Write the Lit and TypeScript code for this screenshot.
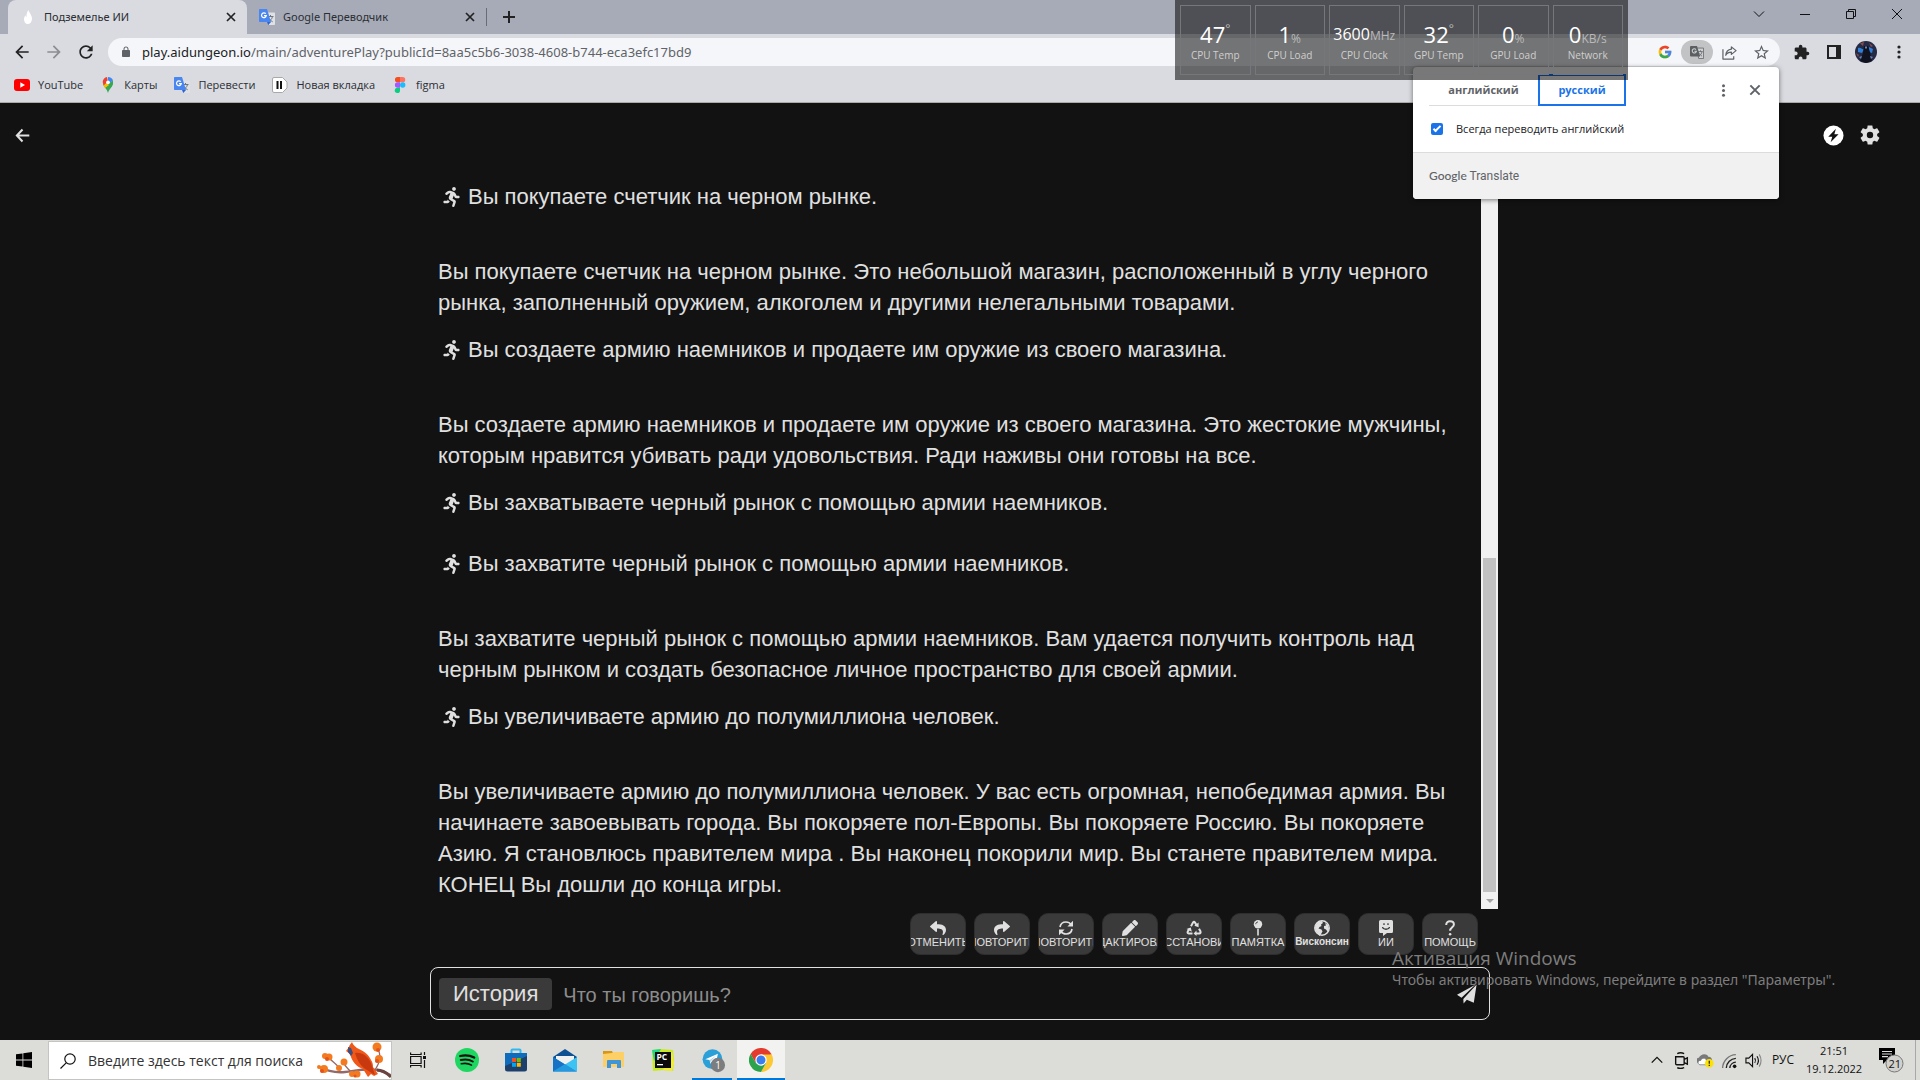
import { LitElement, html, css, svg, nothing } from "lit";
import { customElement, property } from "lit/decorators.js";

const icons: Record<string, { box: string; body: unknown }> = {
  back: { box: "0 0 24 24", body: svg`<path fill="currentColor" d="M20 11H7.83l5.59-5.59L12 4l-8 8 8 8 1.41-1.41L7.83 13H20z"/>` },
  backRound: { box: "0 0 20 20", body: svg`<path fill="none" stroke="currentColor" stroke-width="2.4" d="M18 10H4M10 3 3.400 10 10 17"/>` },
  forward: { box: "0 0 24 24", body: svg`<path fill="currentColor" d="M4 13h12.170l-5.590 5.590L12 20l8-8-8-8-1.410 1.410L16.170 11H4z"/>` },
  reload: { box: "0 0 24 24", body: svg`<path fill="currentColor" d="M17.650 6.350C16.200 4.900 14.210 4 12 4c-4.420 0-7.990 3.580-7.990 8s3.570 8 7.990 8c3.730 0 6.840-2.550 7.730-6h-2.080c-.820 2.330-3.040 4-5.650 4-3.310 0-6-2.690-6-6s2.690-6 6-6c1.660 0 3.140.690 4.220 1.780L13 11h7V4z"/>` },
  lock: { box: "0 0 24 24", body: svg`<path fill="currentColor" fill-rule="evenodd" d="M18 8h-1V6c0-2.760-2.240-5-5-5S7 3.240 7 6v2H6c-1.100 0-2 .9-2 2v10c0 1.100.9 2 2 2h12c1.100 0 2-.9 2-2V10c0-1.100-.9-2-2-2zM9 6c0-1.660 1.340-3 3-3s3 1.340 3 3v2H9z"/>` },
  cross: { box: "0 0 12 12", body: svg`<path fill="none" stroke="currentColor" stroke-width="1.700" d="M2 2l8 8M10 2l-8 8"/>` },
  plus: { box: "0 0 14 14", body: svg`<path fill="none" stroke="currentColor" stroke-width="2" d="M7 1v12M1 7h12"/>` },
  dots: { box: "0 0 16 16", body: svg`<g fill="currentColor"><circle cx="8" cy="3" r="1.600"/><circle cx="8" cy="8" r="1.600"/><circle cx="8" cy="13" r="1.600"/></g>` },
  flame: { box: "0 0 16 16", body: svg`<path fill="#fff" d="M8.500 1c.2 2.500 3.700 4.800 3.500 9-.2 3-2 5-4.200 5S4 13 4 10.500c0-2 .8-3.200 1.500-4.200.2 1 .5 1.500 1 2C6.300 5.500 7 3 8.500 1z"/>` },
  translate: { box: "0 0 16 16", body: svg`<path fill="#dfe1e5" d="M6 3.500h9c.6 0 1 .4 1 1V15c0 .6-.4 1-1 1H10z"/><path fill="none" stroke="#6f7880" stroke-width="1" d="M8.500 7.500h6M11.500 6v1.500M13.500 7.500c-.5 2.500-2 4-4 5M10 9.500c1 1.500 2 2.500 3.700 3.300"/><path fill="#4a86f0" d="M1 0h7l4 13H1c-.6 0-1-.4-1-1V1c0-.6.4-1 1-1z"/><path fill="#3063cc" d="M8 13h4l-2.700 3z"/><path fill="none" stroke="#fff" stroke-width="1.200" d="M6.800 4.700A2.400 2.400 0 1 0 7.300 6.700H5"/>` },
  translateGray: { box: "0 0 16 16", body: svg`<path fill="#cfd0d2" stroke="#6a6d70" d="M7 3.500h8.500v12H10z"/><path fill="none" stroke="#6a6d70" d="M9 7.500h5.500M12 6v1.500M13.800 7.500c-.5 2.500-1.800 4-3.500 5M10.500 9.500c.8 1.500 1.700 2.500 3.300 3.300"/><path fill="#5c5f62" d="M1 1h7l3.500 12H1c-.6 0-1-.4-1-1V2c0-.6.4-1 1-1z"/><path fill="none" stroke="#d0d1d2" stroke-width="1.200" d="M6.800 5.200A2.400 2.400 0 1 0 7.300 7.200H5"/>` },
  youtube: { box: "0 0 16 16", body: svg`<rect y="2" width="16" height="12" rx="3" fill="#f00"/><path fill="#fff" d="M6.300 5.300v5.400L11 8z"/>` },
  maps: { box: "0 0 16 16", body: svg`<path fill="#34a853" d="M3 7.500C4 10 7 12 8 16c1-4 5-6 5-10.500z"/><path fill="#fbbc04" d="M3.400 8.200 9.500 3l1 4L5 11z"/><path fill="#4285f4" d="M8 0c2.500 0 4.400 1.500 5 3.500L8 7z"/><path fill="#ea4335" d="M2.700 5C2.700 2.500 4.600.2 7 0L8 5 3.500 8.300z"/><path fill="#34a853" d="M12.800 3.500c.8 2.500-.3 5-2 7L8 7z"/><circle cx="8" cy="5.300" r="1.900" fill="#fff"/>` },
  page: { box: "0 0 16 16", body: svg`<path fill="#fff" stroke="#a8a8a8" d="M2 .5h8.500L15 5v6l-4.500 4.500H2A1.500 1.500 0 0 1 .5 14V2A1.500 1.500 0 0 1 2 .5z"/><path stroke="#111" stroke-width="2" d="M5.500 4v8M9 4v8"/>` },
  figma: { box: "0 0 16 16", body: svg`<path fill="#f24e1e" d="M8 0v5.300H5.600a2.650 2.650 0 0 1 0-5.300z"/><path fill="#ff7262" d="M8 0h2.600a2.650 2.650 0 0 1 0 5.300H8z"/><path fill="#a259ff" d="M8 5.300v5.400H5.600a2.700 2.700 0 0 1 0-5.400z"/><circle cx="10.700" cy="8" r="2.700" fill="#1abcfe"/><path fill="#0acf83" d="M5.600 10.700H8v2.600a2.650 2.650 0 1 1-2.400-2.600z"/>` },
  google: { box: "2 2 44 44", body: svg`<path fill="#fbbc05" d="M43.611 20.083H42V20H24v8h11.303C33.654 32.657 29.223 36 24 36c-6.627 0-12-5.373-12-12s5.373-12 12-12c3.059 0 5.842 1.154 7.961 3.039l5.657-5.657C34.046 6.053 29.268 4 24 4 12.955 4 4 12.955 4 24s8.955 20 20 20 20-8.955 20-20c0-1.341-.138-2.650-.389-3.917z"/><path fill="#ea4335" d="M6.306 14.691l6.571 4.819C14.655 15.108 18.961 12 24 12c3.059 0 5.842 1.154 7.961 3.039l5.657-5.657C34.046 6.053 29.268 4 24 4 16.318 4 9.656 8.337 6.306 14.691z"/><path fill="#34a853" d="M24 44c5.166 0 9.860-1.977 13.409-5.192l-6.190-5.238C29.211 35.091 26.715 36 24 36c-5.202 0-9.619-3.317-11.283-7.946l-6.522 5.025C9.505 39.556 16.227 44 24 44z"/><path fill="#4285f4" d="M43.611 20.083H42V20H24v8h11.303c-.792 2.237-2.231 4.166-4.087 5.571l6.190 5.238C36.971 39.205 44 34 44 24c0-1.341-.138-2.650-.389-3.917z"/>` },
  share: { box: "0 0 16 16", body: svg`<path fill="none" stroke="currentColor" stroke-width="1.300" stroke-linejoin="round" d="M1 4.500V15h11.500v-3M10 2l5 4-5 4V7.700c-3 0-4.700 1-6 3.300.3-3.500 2.500-6 6-6.500z"/>` },
  star: { box: "2 2 20 20", body: svg`<path fill="currentColor" fill-rule="evenodd" d="M22 9.240l-7.190-.620L12 2 9.190 8.630 2 9.240l5.460 4.730L5.820 21 12 17.270 18.180 21l-1.630-7.030zM12 15.400l-3.760 2.270 1-4.280-3.320-2.880 4.380-.380L12 6.100l1.710 4.040 4.380.380-3.320 2.880 1 4.280z"/>` },
  puzzle: { box: "1 0 23 23", body: svg`<path fill="currentColor" d="M20.500 11H19V7c0-1.100-.9-2-2-2h-4V3.500C13 2.120 11.880 1 10.500 1S8 2.120 8 3.500V5H4c-1.100 0-1.990.9-1.990 2v3.800H3.500c1.490 0 2.700 1.210 2.700 2.700s-1.210 2.700-2.700 2.700H2V20c0 1.100.9 2 2 2h3.800v-1.500c0-1.490 1.210-2.700 2.700-2.700s2.700 1.210 2.700 2.700V22H17c1.100 0 2-.9 2-2v-4h1.500a2.500 2.500 0 0 0 0-5z"/>` },
  panel: { box: "0 0 16 16", body: svg`<path fill="currentColor" fill-rule="evenodd" d="M1 1h14v14H1zM3 3v10h7V3z"/>` },
  avatar: { box: "0 0 22 22", body: svg`<circle cx="11" cy="11" r="11" fill="#252b45"/><path fill="#2d7fd8" d="M3 7c3-1 4 2 6 1l-2 4-4-1zM14 6l4 2-1 4-3-1z"/><path fill="#8a4a4e" d="M5 2.500 9 1l-1 4zM14 2l4 3-2 1zM1 12l3 2-1 2z"/><path fill="#10131f" d="M9 5h4l2 6 2 9-6 2-6-2 3-8z"/><path fill="#6f84b8" d="M10 5.500h2v2h-2zM4 16l3-1-1 3zM15 15l3 1-2 2z"/>` },
  caret: { box: "0 0 12 12", body: svg`<path fill="none" stroke="currentColor" d="M1 3.500l5 5 5-5"/>` },
  minimize: { box: "0 0 12 12", body: svg`<path fill="none" stroke="currentColor" d="M1 6.500h10"/>` },
  restore: { box: "0 0 12 12", body: svg`<path fill="none" stroke="currentColor" d="M1.500 3.500h7v7h-7zM3.500 3.500v-2h7v7h-2"/>` },
  close: { box: "0 0 12 12", body: svg`<path fill="none" stroke="currentColor" d="M1 1l10 10M11 1L1 11"/>` },
  bolt: { box: "0 0 22 22", body: svg`<circle cx="11" cy="11" r="10.500" fill="#fff"/><path fill="#121212" d="M13.500 4 5.500 12.300h4.200L8 18.200l8.300-8.400h-4.400z"/>` },
  gear: { box: "2 2 20 20", body: svg`<path fill="currentColor" fill-rule="evenodd" d="M19.140 12.940c.040-.3.060-.610.060-.940 0-.320-.020-.640-.070-.940l2.030-1.580c.180-.140.230-.410.120-.610l-1.920-3.320c-.120-.220-.370-.290-.590-.220l-2.390.960c-.5-.380-1.030-.7-1.620-.940L14.400 2.810c-.040-.240-.240-.410-.480-.410h-3.840c-.240 0-.430.170-.470.410L9.250 5.350c-.590.240-1.130.570-1.620.940l-2.390-.960c-.220-.080-.470 0-.590.220L2.740 8.870c-.120.210-.080.470.120.610l2.030 1.580c-.050.3-.090.630-.090.940s.020.640.070.940l-2.030 1.580c-.180.140-.230.410-.120.610l1.920 3.320c.120.220.370.290.590.220l2.390-.960c.5.380 1.030.7 1.620.940l.360 2.540c.050.240.240.410.480.410h3.840c.240 0 .440-.170.470-.410l.360-2.540c.590-.240 1.130-.560 1.620-.940l2.390.960c.220.080.470 0 .590-.220l1.920-3.320c.120-.220.070-.470-.120-.610zM12 15.200a3.200 3.200 0 1 1 0-6.400 3.200 3.200 0 0 1 0 6.400z"/>` },
  runner: { box: "0 0 416 512", body: svg`<path fill="currentColor" d="M272 96c26.510 0 48-21.490 48-48S298.510 0 272 0s-48 21.490-48 48 21.490 48 48 48zM113.690 317.470l-14.800 34.520H32c-17.670 0-32 14.330-32 32s14.330 32 32 32h77.450c19.250 0 36.580-11.440 44.110-29.090l8.790-20.520-10.670-6.300c-17.320-10.230-30.060-25.370-37.990-42.610zM384 223.990h-44.030l-26.060-53.250c-12.500-25.550-35.450-44.230-61.780-50.940l-71.080-21.140c-28.300-6.800-57.770-.550-80.840 17.140l-39.670 30.410c-14.030 10.750-16.690 30.830-5.940 44.860s30.840 16.690 44.860 5.940l39.660-30.410c7.670-5.890 17.440-8 25.270-6.140l14.700 4.370-37.460 87.390c-12.620 29.480-1.310 64.010 26.300 80.310l84.980 50.170-27.470 87.730c-5.280 16.860 4.110 34.820 20.970 40.090 3.190 1 6.410 1.480 9.580 1.480 13.610 0 26.230-8.770 30.520-22.450l31.640-101.060c5.910-20.770-2.890-43.080-21.640-54.390l-61.240-36.140 31.310-78.280 20.270 41.430c8 16.340 24.920 26.890 43.110 26.890H384c17.670 0 32-14.330 32-32s-14.330-31.990-32-31.990z"/>` },
  undo: { box: "0 0 512 512", body: svg`<path fill="currentColor" d="M8.309 189.836L184.313 37.851C199.719 24.546 224 35.347 224 56.015v80.053c160.629 1.839 288 34.032 288 186.258 0 61.441-39.581 122.309-83.333 154.132-13.653 9.931-33.111-2.533-28.077-18.631 45.344-145.012-21.507-183.510-176.590-185.742V360c0 20.700-24.300 31.453-39.687 18.164l-176.004-152c-11.071-9.562-11.086-26.753 0-36.328z"/>` },
  redo: { box: "0 0 512 512", body: svg`<path fill="currentColor" transform="matrix(-1 0 0 1 512 0)" d="M8.309 189.836L184.313 37.851C199.719 24.546 224 35.347 224 56.015v80.053c160.629 1.839 288 34.032 288 186.258 0 61.441-39.581 122.309-83.333 154.132-13.653 9.931-33.111-2.533-28.077-18.631 45.344-145.012-21.507-183.510-176.590-185.742V360c0 20.700-24.300 31.453-39.687 18.164l-176.004-152c-11.071-9.562-11.086-26.753 0-36.328z"/>` },
  refresh: { box: "0 0 16 16", body: svg`<path fill="none" stroke="currentColor" stroke-width="1.700" d="M2 7c.5-3 3-5 6-5 2.300 0 4 1 5.300 2.800M14 9c-.5 3-3 5-6 5-2.300 0-4-1-5.300-2.800"/><path fill="currentColor" d="M15 .8v5.600H9.400zM1 15.200V9.600h5.600z"/>` },
  pencil: { box: "0 0 512 512", body: svg`<path fill="currentColor" d="M497.900 142.100l-46.100 46.100c-4.700 4.700-12.300 4.700-17 0l-111-111c-4.700-4.700-4.700-12.300 0-17l46.100-46.100c18.700-18.700 49.100-18.700 67.900 0l60.100 60.100c18.800 18.700 18.800 49.100 0 67.900zM284.200 99.800L21.600 362.400.4 483.900c-2.900 16.400 11.400 30.600 27.800 27.800l121.500-21.300 262.600-262.600c4.700-4.700 4.700-12.300 0-17l-111-111c-4.800-4.700-12.400-4.700-17.100 0z"/>` },
  recycle: { box: "0 0 16 16", body: svg`<g fill="none" stroke="currentColor" stroke-width="2"><path d="M5 6.200 7 2.600q1-1.500 2 0L10.500 5"/><path d="M13 8.800l1.500 2.700q.5 1.700-1.300 2H10"/><path d="M6.500 13.500H2.800q-1.800-.3-1-2L3.300 9"/></g><path fill="currentColor" d="M12.600 2.600v4.600L8.300 5.800zM10.500 10.500v5.500L7.600 13.400zM.5 9l4.300-1.500 1 4.300z"/>` },
  pin: { box: "0 0 16 16", body: svg`<circle cx="8" cy="4.200" r="4.200" fill="currentColor"/><path fill="currentColor" d="M7.200 9h1.600v6L8 16l-.8-1z"/><path fill="none" stroke="#3a3a3a" d="M5.800 4.200c0-1.300.8-2.200 2.100-2.200"/>` },
  globe: { box: "0 0 16 16", body: svg`<circle cx="8" cy="8" r="7.200" fill="none" stroke="currentColor" stroke-width="1.500"/><path fill="currentColor" d="M1.500 5.500 4 2l4-1 1 2-2 1.500.500 1.500-2 1-1 1.500 3 1 1 2-2 3.500-1 1C4 13.500 1 11 1 7zM11 3l3 2 1 4-1.500 2.500-1.500-2-2-1V6l2-.5z"/>` },
  chat: { box: "0 0 16 16", body: svg`<path fill="currentColor" d="M2.500 0h11A1.500 1.500 0 0 1 15 1.500v10a1.500 1.500 0 0 1-1.500 1.500H9l-4 3v-3H2.500A1.500 1.500 0 0 1 1 11.500v-10A1.500 1.500 0 0 1 2.500 0z"/><path fill="none" stroke="#3a3a3a" stroke-width="1.300" d="M4.500 7c.5 3 6.500 3 7 0M6 3.300v1.800M10 3.300v1.800"/>` },
  question: { box: "0 0 16 16", body: svg`<path fill="none" stroke="currentColor" stroke-width="2" d="M4.200 5C4.200 2.500 5.800 1.200 8 1.200s3.900 1.200 3.900 3.200c0 2.800-3.800 2.800-3.800 6.300"/><circle cx="8.100" cy="14.200" r="1.300" fill="currentColor"/>` },
  send: { box: "0 0 20 20", body: svg`<path fill="currentColor" d="M18.300.8 0 10.800l4.500 3zM19.600.5 6.300 15l.3 4.500 3.200-3.800 7 3z"/>` },
  start: { box: "0 0 16 16", body: svg`<path d="M0 2.300 6.500 1.400v6.200H0zM7.300 1.300 16 0v7.600H7.300zM0 8.400h6.500v6.200L0 13.700zM7.300 8.400H16V16l-8.700-1.300z"/>` },
  search: { box: "0 0 16 16", body: svg`<circle cx="10" cy="6" r="5.200" fill="none" stroke="currentColor" stroke-width="1.200"/><path stroke="currentColor" stroke-width="1.200" d="M6.200 9.800.5 15.500"/>` },
  cardinal: { box: "0 0 74 37", body: svg`
    <path fill="none" stroke="#94696a" stroke-width="2.500" d="M2 25c8 4 16 6 26 5s20-4 32-2c6 1 10 3 15 6"/>
    <path fill="none" stroke="#94696a" stroke-width="1.300" d="M23 30c0-6-5-8-11-14M34 30c-3-4-6-5-7-9M58 28c5-8 7-14 2-23"/>
    <path fill="none" stroke="#6b443f" stroke-width="3" d="M60 28c6 0 10 3 14 7"/>
    <g fill="#f47a20"><circle cx="8" cy="14" r="3"/><circle cx="12" cy="15" r="3.500"/><circle cx="2" cy="25" r="2"/><circle cx="7" cy="27" r="4"/><circle cx="22" cy="26" r="3"/><circle cx="27" cy="20" r="3.500"/><circle cx="35" cy="32" r="3"/><circle cx="40" cy="32" r="3.500"/><circle cx="60" cy="5" r="4.500"/><circle cx="62" cy="17" r="4"/></g>
    <g fill="#e4521b"><circle cx="10" cy="17" r="2"/><circle cx="5" cy="29" r="2"/><circle cx="38" cy="34" r="1.500"/><circle cx="61" cy="8" r="2"/><circle cx="60" cy="19" r="2"/></g>
    <path fill="#f0581a" d="M35 0C36 3 38 4 40 6C47 9 52 13 54 18C56 21 56 23 56 25L61 32L57 34L54 32L51 35L46 27C40 25 35 20 33 12L29 9L32 5C32 3 34 2 35 0Z"/>
    <path fill="#c9390f" d="M38 11C45 10 51 14 54 21L58 33L50 28C44 25 40 18 38 11Z"/>
    <path fill="#3f4f7d" d="M31 5L34 6L36 11L34 14L31 10Z"/>` },
  taskview: { box: "0 0 16 16", body: svg`<path fill="none" stroke="#111" stroke-width="1.200" d="M.6.5v2h10.500v-2M.6 15.500v-2h10.500v2M.6 4.500h10.500v7H.6zM14.500 0v3M14.500 8v8"/><path fill="#111" d="M13 4h3v3h-3z"/>` },
  spotify: { box: "0 0 24 24", body: svg`<circle cx="12" cy="12" r="12" fill="#1ed760"/><g fill="none" stroke="#111" stroke-linecap="round"><path stroke-width="2.300" d="M5.200 8c5-1.300 9.700-.8 14 1.600"/><path stroke-width="2" d="M5.800 12c4.500-1.200 8.500-.6 12 1.500"/><path stroke-width="1.600" d="M6.300 15.800c3.800-.9 7.200-.5 10.200 1.300"/></g>` },
  store: { box: "0 0 24 24", body: svg`<path fill="none" stroke="#30b8ee" stroke-width="2" d="M7.500 6V2.500q0-1 1-1h7q1 0 1 1V6"/><path fill="#1d3f6c" d="M1 5h22v16q0 2.500-2.500 2.500h-17Q1 23.500 1 21z"/><path fill="#0f6cbd" d="M1 5h22v3L1 18z"/><path fill="#f25022" d="M8 10h4v4H8z"/><path fill="#7fba00" d="M12.800 10h4v4h-4z"/><path fill="#00a4ef" d="M8 14.800h4v4H8z"/><path fill="#ffb900" d="M12.800 14.800h4v4h-4z"/>` },
  mail: { box: "0 0 24 24", body: svg`<path fill="#0f4f94" d="M0 9 12 1l12 8v4H0z"/><path fill="#f0f0f0" d="M3 8h18v6l-9 5-9-5z"/><path fill="#1a86d8" d="M0 9l13 8 11 6.500H0z"/><path fill="#3cc3f2" d="M24 9 12 16.500l12 7z"/><path fill="#1672c4" d="M0 9l12 7.500L0 23.500z"/><path fill="#2399e0" d="M12 16 0 23.500h24z"/>` },
  folder: { box: "0 0 24 24", body: svg`<path fill="#d9960f" d="M1 3h9l1 2v3H1z"/><path fill="#fdd067" d="M1 6l9-1 2-1h10v15H1z"/><path fill="#3f95d8" d="M5 20v-7q0-1 1-1h12q1 0 1 1v7h-4v-4H9v4z"/>` },
  pycharm: { box: "0 0 24 24", body: svg`<path fill="#c9ea1f" d="M1 2l8-1 13 1 1 11-1 10-10-1-10 1z"/><path fill="#21d789" d="M1 2l9-1L3 13z"/><path fill="#f4ee32" d="M21 3l2 12-2 8-9-1z"/><path fill="#0b0b0b" d="M4 4h16v16H4z"/><text x="5.500" y="12" font-family="Open Sans, sans-serif" font-size="8.500" font-weight="700" fill="#fff">PC</text><path fill="#fff" d="M6 16h6v1.300H6z"/>` },
  telegram: { box: "-3 0 30 27", body: svg`<circle cx="12" cy="12" r="11" fill="#2a9fd8"/><path fill="#fff" d="M4 12 18 6l-2.500 12-4-3-2 2-.7-4z"/><path fill="#b5d6e8" d="M9 13l7-5-6 6.500-.5 2.500z"/><circle cx="18" cy="18.500" r="8" fill="#7c7d7e"/><text x="15" y="22.500" font-family="Open Sans, sans-serif" font-size="11" fill="#fff">1</text>` },
  chrome: { box: "0 0 24 24", body: svg`<path fill="#e33b2e" d="M1.600 6A12 12 0 0 1 22.400 6L12 12z"/><path fill="#e33b2e" d="M1.600 6 7 15.500 12 6.500h10.700L22.400 6z"/><path fill="#fcc934" d="M22.700 6.500A12 12 0 0 1 12 24l5-9-5-8.500z"/><path fill="#2ba24c" d="M1.600 6A12 12 0 0 0 12 24l5-9-10 .2z"/><circle cx="12" cy="12" r="5.700" fill="#fff"/><circle cx="12" cy="12" r="4.500" fill="#3b7ded"/>` },
  up: { box: "0 0 16 16", body: svg`<path fill="none" stroke="#111" stroke-width="1.500" d="M2 11l6-6 6 6"/>` },
  camera: { box: "0 0 16 16", body: svg`<path fill="none" stroke="#111" stroke-width="1.300" d="M2.500 4.500h7q1 0 1 1v5.500q0 1-1 1h-6q-1 0-1-1zM10.500 7l3-1.500v6l-3-1.500M4 1.500q3-1.500 6.500 0M4 14.800q3 1.500 6.500 0"/>` },
  cloud: { box: "0 0 18 16", body: svg`<path fill="#77797a" d="M3 11a3 3 0 0 1-1-6C4 1 10 0 12 4c3 0 4 2 4 4z"/><path fill="#fff" stroke="#777" stroke-width=".8" d="M3 12.500c-3-1-2-5 1-4.500 1-3 5-3 6-.5v5z"/><circle cx="13" cy="11" r="4.500" fill="#fde100"/><path stroke="#222" stroke-width="1.300" d="M13 8.300v3.200M13 12.500v1.200"/>` },
  wifi: { box: "0 0 16 16", body: svg`<g fill="none" stroke-width="1.300"><path stroke="#777" d="M1.500 15A13 13 0 0 1 14 2.500"/><path stroke="#222" d="M5 15a9.500 9.500 0 0 1 9-9M8.300 15A6 6 0 0 1 14 9.500"/></g><circle cx="12.800" cy="13.500" r="1.700" fill="#111"/>` },
  volume: { box: "0 0 18 16", body: svg`<g fill="none" stroke="#111" stroke-width="1.200"><path d="M1 5.500h3l4-4v13l-4-4H1zM10.300 5.500q1.700 2.500 0 5M12.700 3.500q3 4.500 0 9"/><path stroke="#888" d="M15 1.500q4 6.500 0 13"/></g>` },
  notice: { box: "0 0 26 26", body: svg`<path fill="#000" d="M1 1h16v12H9l-4 4v-4H1z"/><path stroke="#ddd" stroke-width="1.200" d="M4 4.500h10M4 7h10M4 9.600h6"/><circle cx="16.500" cy="16.500" r="8.500" fill="#d0d0cd" stroke="#777"/><text x="10.500" y="20.500" font-family="Open Sans, sans-serif" font-size="11" fill="#111">21</text>` },
};

@customElement("ui-icon")
class UiIcon extends LitElement {
  static styles = css`
    :host { display: inline-flex; flex: none; }
  `;
  @property() name = "";
  @property({ type: Number }) w = 16;
  @property({ type: Number }) h = 0;
  render() {
    const icon = icons[this.name];
    return html`<svg width=${this.w} height=${this.h || this.w} viewBox=${icon.box} aria-hidden="true">${icon.body}</svg>`;
  }
}

@customElement("browser-chrome")
class BrowserChrome extends LitElement {
  static styles = css`
    :host { display: block; background: #d9dbe0; border-bottom: 1px solid #aaaaab; font: 12px/16px "Open Sans", sans-serif; color: #2c2e33; }
    button { border: 0; padding: 0; background: none; color: inherit; font: inherit; display: inline-flex; align-items: center; justify-content: center; }
    .tabs { display: flex; height: 34px; background: #a6abb7; padding-left: 8px; }
    .tab { display: flex; align-items: center; gap: 8px; width: 239px; padding: 0 10px 0 12px; box-sizing: border-box; font: 11px/16px "Noto Sans", sans-serif; }
    .tab.active { background: #d9dbe0; border-radius: 8px 8px 0 0; }
    .tab .name { flex: 1; white-space: nowrap; }
    .tab button { color: #222; }
    .new { width: 44px; border-left: 1px solid #686c76; margin: 8px 0; color: #222; }
    .system { display: flex; margin-left: auto; color: #111; }
    .system button { width: 46px; height: 28px; }
    .bar { display: flex; align-items: center; height: 36px; box-sizing: border-box; padding: 0 12px 0 12px; color: #222; }
    .nav { display: flex; gap: 12px; margin-right: 12px; }
    .nav .off { color: #8b8d91; }
    .address { flex: 1; display: flex; align-items: center; gap: 10px; height: 28px; border-radius: 14px; background: #f5f6f9; padding: 0 3px 0 12px; color: #5f6368; }
    .url { flex: 1; font: 13px/20px "Noto Sans", sans-serif; white-space: nowrap; text-decoration: none; color: #606368; }
    .url .host { color: #202124; }
    .tools { display: flex; align-items: center; }
    .tools button { width: 32px; height: 24px; }
    .tools .on { background: #c1c3c5; border-radius: 12px; }
    .right { display: flex; align-items: center; padding-left: 6px; }
    .right button { width: 32px; }
    .right .more { width: 24px; margin-left: 5px; margin-right: -3px; }
    .marks { display: flex; align-items: center; gap: 17px; height: 32px; box-sizing: border-box; padding: 0 14px 3px; font-size: 11px; }
    .marks a { display: flex; align-items: center; gap: 8px; color: inherit; text-decoration: none; }
  `;
  render() {
    const marks = [["youtube", "YouTube"], ["maps", "Карты"], ["translate", "Перевести"], ["page", "Новая вкладка"], ["figma", "figma"]];
    const system = [["caret", "Поиск вкладок"], ["minimize", "Свернуть"], ["restore", "Свернуть в окно"], ["close", "Закрыть окно"]];
    return html`
      <div class="tabs">
        <div class="tab active"><ui-icon name="flame" w="16"></ui-icon><span class="name">Подземелье ИИ</span><button aria-label="Закрыть"><ui-icon name="cross" w="12"></ui-icon></button></div>
        <div class="tab"><ui-icon name="translate" w="16"></ui-icon><span class="name">Google Переводчик</span><button aria-label="Закрыть"><ui-icon name="cross" w="12"></ui-icon></button></div>
        <button class="new" aria-label="Новая вкладка"><ui-icon name="plus" w="14"></ui-icon></button>
        <div class="system">
          ${system.map(([n, label]) => html`<button aria-label=${label}><ui-icon name=${n} w="12"></ui-icon></button>`)}
        </div>
      </div>
      <div class="bar">
        <div class="nav">
          <button aria-label="Назад"><ui-icon name="back" w="20"></ui-icon></button>
          <button class="off" aria-label="Вперед"><ui-icon name="forward" w="20"></ui-icon></button>
          <button aria-label="Обновить"><ui-icon name="reload" w="20"></ui-icon></button>
        </div>
        <div class="address">
          <ui-icon name="lock" w="12"></ui-icon>
          <a class="url" href="#"><span class="host">play.aidungeon.io</span>/main/adventurePlay?publicId=8aa5c5b6-3038-4608-b744-eca3efc17bd9</a>
          <div class="tools">
            <button aria-label="Google"><ui-icon name="google" w="14"></ui-icon></button>
            <button class="on" aria-label="Перевести"><ui-icon name="translateGray" w="14"></ui-icon></button>
            <button aria-label="Поделиться"><ui-icon name="share" w="15"></ui-icon></button>
            <button aria-label="В закладки"><ui-icon name="star" w="15"></ui-icon></button>
          </div>
        </div>
        <div class="right">
          <button aria-label="Расширения"><ui-icon name="puzzle" w="16"></ui-icon></button>
          <button aria-label="Боковая панель"><ui-icon name="panel" w="16"></ui-icon></button>
          <button aria-label="Профиль"><ui-icon name="avatar" w="22"></ui-icon></button>
          <button class="more" aria-label="Меню"><ui-icon name="dots" w="16"></ui-icon></button>
        </div>
      </div>
      <nav class="marks">${marks.map(([i, t]) => html`<a href="#"><ui-icon name=${i} w="16"></ui-icon>${t}</a>`)}</nav>
    `;
  }
}

@customElement("translate-popup")
class TranslatePopup extends LitElement {
  static styles = css`
    :host { display: block; background: #fff; border-radius: 4px; overflow: hidden; box-shadow: 0 1px 5px rgba(0, 0, 0, 0.5); font: 11px/16px "Open Sans", sans-serif; color: #202124; }
    button { border: 0; padding: 0; background: none; font: inherit; color: #5f6368; display: inline-flex; align-items: center; justify-content: center; }
    .head { display: flex; align-items: center; padding: 7px 8px 0 16px; }
    .lang { width: 109px; height: 32px; box-sizing: border-box; border-bottom: 1px solid #dadce0; font-weight: 700; }
    .lang.on { width: 88px; border: 2px solid #1a73e8; color: #1a73e8; }
    .head .icon { width: 32px; height: 32px; }
    .gap { flex: 1; }
    .always { display: flex; align-items: center; gap: 13px; padding: 15px 18px; }
    .always input { appearance: none; width: 12px; height: 12px; margin: 0; border-radius: 2px; background: #1a73e8; display: grid; place-items: center; }
    .always input:checked::before { content: ""; width: 6px; height: 2px; border: solid #fff; border-width: 0 0 2px 2px; transform: translateY(-1px) rotate(-45deg); }
    .foot { border-top: 1px solid #dadce0; background: #f1f1f1; padding: 14px 16px; font: 12px/18px Roboto, sans-serif; color: #5f6368; }
    .foot b { font: 500 12px/18px Lato, sans-serif; }
  `;
  render() {
    return html`
      <div class="head">
        <button class="lang">английский</button><button class="lang on">русский</button>
        <span class="gap"></span>
        <button class="icon" aria-label="Параметры"><ui-icon name="dots" w="15"></ui-icon></button>
        <button class="icon" aria-label="Закрыть"><ui-icon name="cross" w="14"></ui-icon></button>
      </div>
      <div class="always"><input id="always" type="checkbox" checked /><label for="always">Всегда переводить английский</label></div>
      <div class="foot"><b>Google</b> Translate</div>
    `;
  }
}

@customElement("system-monitor")
class SystemMonitor extends LitElement {
  static styles = css`
    :host { display: flex; gap: 4px; padding: 5px; box-sizing: border-box; background: rgba(0, 0, 0, 0.53); color: #fff; font-family: "Open Sans", sans-serif; }
    .cell { flex: 1 1 0; min-width: 0; box-sizing: border-box; height: 70px; border: 1px solid #75777a; padding-top: 13px; text-align: center; white-space: nowrap; }
    .value { display: flex; justify-content: center; align-items: baseline; height: 30px; font-size: 22px; line-height: 30px; }
    .value.long { font-size: 16px; }
    .unit { font-size: 12px; color: #b9babb; }
    .unit.deg { align-self: flex-start; line-height: 20px; }
    .label { font-size: 10px; line-height: 12px; color: #cfcfcf; }
  `;
  render() {
    const cells = [["47", "°", "CPU Temp"], ["1", "%", "CPU Load"], ["3600", "MHz", "CPU Clock"], ["32", "°", "GPU Temp"], ["0", "%", "GPU Load"], ["0", "KB/s", "Network"]];
    return html`${cells.map(([v, u, l]) => html`
      <div class="cell">
        <div class="value ${v.length > 3 ? "long" : ""}">${v}<span class="unit ${u === "°" ? "deg" : ""}">${u}</span></div>
        <div class="label">${l}</div>
      </div>`)}`;
  }
}

@customElement("adventure-page")
class AdventurePage extends LitElement {
  static styles = css`
    :host { display: flex; flex-direction: column; flex: 1; background: #121212; color: #e0e0e0; font-family: "Liberation Sans", Arial, sans-serif; position: relative; }
    button { border: 0; padding: 0; background: none; color: inherit; font: inherit; display: inline-flex; align-items: center; justify-content: center; }
    .top { display: flex; align-items: center; gap: 16px; height: 64px; padding: 0 40px 0 14px; }
    .top .first { margin-right: auto; }
    .scroller { display: flex; flex: 1; width: 100%; max-width: 1076px; margin: 0 auto; }
    .story { flex: 1; display: flex; flex-direction: column; padding: 14px 16px 0; font-size: 22px; line-height: 31px; }
    .story p { margin: 14px 0 16px; }
    .story .act { display: flex; align-items: center; gap: 8px; margin: 0 0 30px; padding-left: 5px; }
    .story p:last-child { margin-bottom: 0; }
    .track { display: flex; flex-direction: column; justify-content: flex-end; width: 17px; background: #f1f1f1; }
    .thumb { height: 45%; margin: 0 2px; background: #c1c1c1; }
    .down { height: 17px; display: grid; place-items: center; }
    .down::before { content: ""; border: 4px solid transparent; border-top-color: #a3a3a3; border-bottom: 0; }
    .panel { width: 100%; max-width: 1060px; margin: 4px auto 20px; }
    .actions { display: flex; justify-content: flex-end; gap: 8px; padding-right: 12px; margin-bottom: 12px; }
    .actions button { width: 56px; height: 42px; border-radius: 10px; background: #3a3a3a; flex-direction: column; overflow: hidden; border: 1px solid #2e2e2e; box-sizing: border-box; padding-bottom: 1px; }
    .actions span { font-size: 11px; line-height: 12px; white-space: nowrap; }
    .actions .strong { font-size: 10px; font-weight: 700; }
    .prompt { display: flex; align-items: center; gap: 11px; height: 53px; box-sizing: border-box; border: 1px solid #e0e0e0; border-radius: 8px; padding: 0 12px 0 8px; }
    .prompt .mode { height: 32px; padding: 0 14px; border-radius: 4px; background: #3a3a3a; font-size: 22px; }
    .prompt input { flex: 1; min-width: 0; border: 0; padding: 2px 0 0; background: none; color: #e0e0e0; outline: 0; font: 20px/24px "Liberation Sans", Arial, sans-serif; }
    .prompt input::placeholder { color: #8c8c8c; }
    .watermark { position: absolute; right: 73px; bottom: 51px; width: 455px; color: #7d7d7d; font: 14px/18px "Noto Sans", sans-serif; white-space: nowrap; pointer-events: none; }
    .watermark strong { display: block; font: 400 19px/26px "Open Sans", sans-serif; }
  `;
  render() {
    const story: [string, string][] = [
      ["a", "Вы покупаете счетчик на черном рынке."],
      ["p", "Вы покупаете счетчик на черном рынке. Это небольшой магазин, расположенный в углу черного рынка, заполненный оружием, алкоголем и другими нелегальными товарами."],
      ["a", "Вы создаете армию наемников и продаете им оружие из своего магазина."],
      ["p", "Вы создаете армию наемников и продаете им оружие из своего магазина. Это жестокие мужчины, которым нравится убивать ради удовольствия. Ради наживы они готовы на все."],
      ["a", "Вы захватываете черный рынок с помощью армии наемников."],
      ["a", "Вы захватите черный рынок с помощью армии наемников."],
      ["p", "Вы захватите черный рынок с помощью армии наемников. Вам удается получить контроль над черным рынком и создать безопасное личное пространство для своей армии."],
      ["a", "Вы увеличиваете армию до полумиллиона человек."],
      ["p", "Вы увеличиваете армию до полумиллиона человек. У вас есть огромная, непобедимая армия. Вы начинаете завоевывать города. Вы покоряете пол-Европы. Вы покоряете Россию. Вы покоряете Азию. Я становлюсь правителем мира . Вы наконец покорили мир. Вы станете правителем мира. КОНЕЦ Вы дошли до конца игры."],
    ];
    const actions = [["undo", "ОТМЕНИТЬ"], ["redo", "ПОВТОРИТЬ"], ["refresh", "ПОВТОРИТЬ"], ["pencil", "РЕДАКТИРОВАТЬ"], ["recycle", "ВОССТАНОВИТЬ"], ["pin", "ПАМЯТКА"], ["globe", "Висконсин"], ["chat", "ИИ"], ["question", "ПОМОЩЬ"]];
    return html`
      <div class="top">
        <button class="first" aria-label="Назад"><ui-icon name="backRound" w="17"></ui-icon></button>
        <button aria-label="Энергия"><ui-icon name="bolt" w="21"></ui-icon></button>
        <button aria-label="Настройки"><ui-icon name="gear" w="20"></ui-icon></button>
      </div>
      <div class="scroller">
        <div class="story">
          ${story.map(([k, t]) => k === "a"
            ? html`<div class="act"><ui-icon name="runner" w="17" h="20"></ui-icon><span>${t}</span></div>`
            : html`<p>${t}</p>`)}
        </div>
        <div class="track"><div class="thumb"></div><div class="down"></div></div>
      </div>
      <div class="panel">
        <div class="actions">
          ${actions.map(([i, t]) => html`<button><ui-icon name=${i} w="16"></ui-icon><span class=${i === "globe" ? "strong" : nothing}>${t}</span></button>`)}
        </div>
        <div class="prompt">
          <button class="mode">История</button>
          <input aria-label="Что ты говоришь?" placeholder="Что ты говоришь?" />
          <button aria-label="Отправить"><ui-icon name="send" w="20"></ui-icon></button>
        </div>
      </div>
      <div class="watermark"><strong>Активация Windows</strong>Чтобы активировать Windows, перейдите в раздел "Параметры".</div>
    `;
  }
}

@customElement("task-bar")
class TaskBar extends LitElement {
  static styles = css`
    :host { display: flex; height: 40px; background: #dcdcd8; color: #111; font: 12px/18px "Open Sans", sans-serif; }
    button { border: 0; padding: 0; background: none; color: inherit; font: inherit; display: inline-flex; align-items: center; justify-content: center; }
    .start { width: 48px; }
    .find { display: flex; align-items: center; width: 344px; box-sizing: border-box; margin: 1px 2px 0 0; border: 1px solid #c4c4c2; background: #fff; padding-left: 11px; }
    .find input { flex: 1; min-width: 0; border: 0; padding: 0 0 0 12px; background: none; outline: 0; font: 14px/20px "Open Sans", sans-serif; }
    .find input::placeholder { color: #333; }
    .apps { display: flex; gap: 1px; }
    .apps button { width: 48px; box-sizing: border-box; border: solid transparent; border-width: 0 4px; }
    .apps .open { background: linear-gradient(#0078d7, #0078d7) bottom / 100% 2px no-repeat content-box; }
    .apps .active { border-width: 0; background: linear-gradient(#0078d7, #0078d7) bottom / 100% 2px no-repeat #f2f2f1; }
    .tray { display: flex; align-items: center; margin-left: auto; }
    .tray button { width: 24px; height: 40px; }
    .tray .lang { width: 36px; }
    .tray .clock { width: 66px; flex-direction: column; font-size: 11px; }
    .tray .note { width: 48px; }
    .edge { width: 4px; height: 40px; border-left: 1px solid #a8a8a6; }
  `;
  render() {
    const apps: [string, string, number][] = [
      ["taskview", "Представление задач", 16], ["spotify", "Spotify", 24], ["store", "Microsoft Store", 24], ["mail", "Почта", 24],
      ["folder", "Проводник", 24], ["pycharm", "PyCharm", 24], ["telegram", "Telegram", 27], ["chrome", "Google Chrome", 24],
    ];
    const tray: [string, string][] = [["up", "Скрытые значки"], ["camera", "Камера"], ["cloud", "OneDrive"], ["wifi", "Сеть"], ["volume", "Громкость"]];
    return html`
      <button class="start" aria-label="Пуск"><ui-icon name="start" w="16"></ui-icon></button>
      <div class="find">
        <ui-icon name="search" w="16"></ui-icon>
        <input aria-label="Поиск" placeholder="Введите здесь текст для поиска" />
        <ui-icon name="cardinal" w="74" h="37"></ui-icon>
      </div>
      <div class="apps">
        ${apps.map(([a, label, w]) => html`<button aria-label=${label} class=${a === "telegram" ? "open" : a === "chrome" ? "active" : nothing}><ui-icon name=${a} w=${w}></ui-icon></button>`)}
      </div>
      <div class="tray">
        ${tray.map(([a, label]) => html`<button aria-label=${label}><ui-icon name=${a} w=${a === "up" ? 14 : 17}></ui-icon></button>`)}
        <button class="lang">РУС</button>
        <button class="clock"><span>21:51</span><span>19.12.2022</span></button>
        <button class="note" aria-label="Уведомления"><ui-icon name="notice" w="26"></ui-icon></button>
        <span class="edge"></span>
      </div>
    `;
  }
}

@customElement("app-root")
class AppRoot extends LitElement {
  static styles = css`
    :host { display: flex; flex-direction: column; min-height: 100vh; position: relative; overflow: hidden; }
    .popup { position: absolute; top: 67px; right: 141px; width: 366px; }
    .monitor { position: absolute; top: 0; right: 292px; width: 453px; }
  `;
  render() {
    return html`
      <browser-chrome></browser-chrome>
      <adventure-page></adventure-page>
      <task-bar></task-bar>
      <translate-popup class="popup"></translate-popup>
      <system-monitor class="monitor"></system-monitor>
    `;
  }
}
